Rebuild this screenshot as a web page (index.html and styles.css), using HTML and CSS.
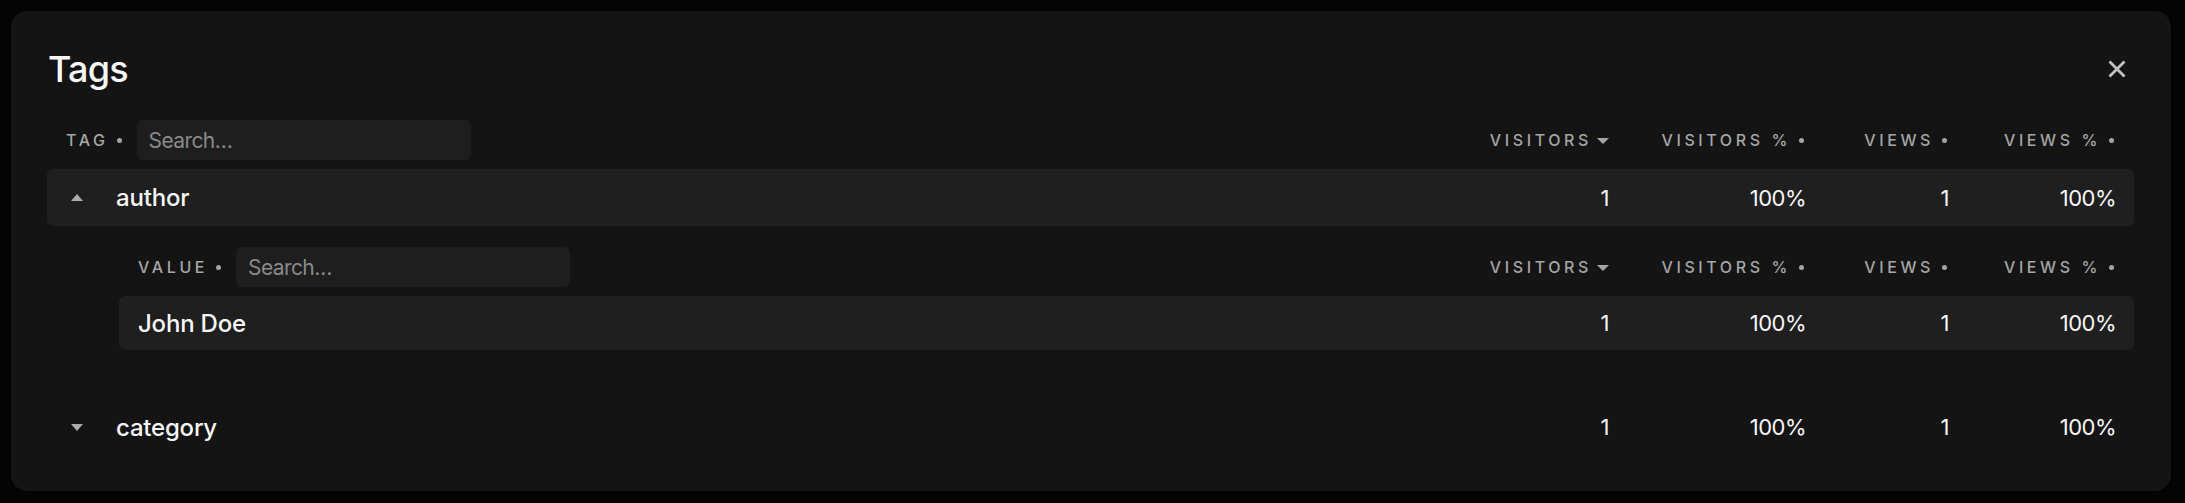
FILE: index.html
```html
<!DOCTYPE html>
<html lang="en">
<head>
<meta charset="utf-8">
<title>Tags</title>
<link rel="stylesheet" href="styles.css">
</head>
<body>
<div class="page">
  <div class="modal">
    <div class="title-row">
      <h1 class="title">Tags</h1>
      <button class="close" aria-label="Close">
        <svg width="18" height="18" viewBox="0 0 18 18"><path d="M1.5 1.5 L16.5 16.5 M16.5 1.5 L1.5 16.5" stroke="#c2c2c2" stroke-width="2.8" fill="none"/></svg>
      </button>
    </div>

    <div class="grid head">
      <div class="head-key"><span class="label">TAG</span><span class="dot"></span><input class="search" placeholder="Search…"></div>
      <div class="hcell"><span class="label">VISITORS</span><span class="sort"></span></div>
      <div class="hcell"><span class="label">VISITORS %</span><span class="dot end"></span></div>
      <div class="hcell"><span class="label">VIEWS</span><span class="dot end"></span></div>
      <div class="hcell"><span class="label">VIEWS %</span><span class="dot end"></span></div>
    </div>

    <div class="grid row filled tall">
      <div class="key"><span class="tri up"></span>author</div>
      <div class="num">1</div>
      <div class="num">100%</div>
      <div class="num">1</div>
      <div class="num">100%</div>
    </div>

    <div class="sub">
      <div class="grid head">
        <div class="head-key"><span class="label">VALUE</span><span class="dot"></span><input class="search" placeholder="Search…"></div>
        <div class="hcell"><span class="label">VISITORS</span><span class="sort"></span></div>
        <div class="hcell"><span class="label">VISITORS %</span><span class="dot end"></span></div>
        <div class="hcell"><span class="label">VIEWS</span><span class="dot end"></span></div>
        <div class="hcell"><span class="label">VIEWS %</span><span class="dot end"></span></div>
      </div>
      <div class="grid row filled short">
        <div class="key">John Doe</div>
        <div class="num">1</div>
        <div class="num">100%</div>
        <div class="num">1</div>
        <div class="num">100%</div>
      </div>
    </div>

    <div class="grid row plain">
      <div class="key"><span class="tri down"></span>category</div>
      <div class="num">1</div>
      <div class="num">100%</div>
      <div class="num">1</div>
      <div class="num">100%</div>
    </div>
  </div>
</div>
</body>
</html>
```

FILE: styles.css
```css
* { box-sizing: border-box; }
html, body {
  margin: 0;
  padding: 0;
  background: #050505;
  font-family: Inter, "Liberation Sans", sans-serif;
  color: #f7f7f7;
}
.page {
  width: 2185px;
  height: 503px;
  padding: 11px 14px 12px 11px;
}
.modal {
  width: 2160px;
  height: 480px;
  background: #141414;
  border-radius: 16px;
  padding: 36px 37px 35px 36px;
  box-shadow: 0 0 12px rgba(0,0,0,0.6);
}
.title-row {
  display: flex;
  align-items: center;
  justify-content: space-between;
  height: 44px;
  margin-bottom: 29px;
}
.title {
  margin: 0;
  font-size: 36px;
  line-height: 44px;
  font-weight: 500;
  letter-spacing: -0.8px;
  padding-left: 1px;
}
.close {
  width: 18px;
  height: 18px;
  padding: 0;
  margin: 0 8px 0 0;
  border: 0;
  background: none;
  display: block;
}
.close svg { display: block; }

.grid {
  display: grid;
  grid-template-columns: 1fr 160px 197px 143px 167px;
  align-items: center;
  padding: 0 18px 0 19px;
}
.head { height: 40px; margin-bottom: 9px; }
.head-key { display: flex; align-items: center; }
.label {
  font-size: 16px;
  letter-spacing: 3.6px;
  color: #a6a6a6;
  font-weight: 500;
  line-height: 20px;
}
.dot {
  width: 5px;
  height: 5px;
  border-radius: 50%;
  background: #a6a6a6;
  margin-left: 8px;
  flex: none;
}
.dot.end { margin-right: 2px; }
.head-key .dot { margin-right: 15px; }
.search {
  width: 334px;
  height: 40px;
  border: 0;
  border-radius: 6px;
  background: #1e1e1e;
  padding: 0 0 0 12px;
  font-family: Inter, "Liberation Sans", sans-serif;
  font-size: 21px;
  color: #ddd;
  outline: none;
  letter-spacing: -0.6px;
}
.search::placeholder { color: #8a8a8a; }
.hcell {
  display: flex;
  align-items: center;
  justify-content: flex-end;
}
.sort {
  width: 0;
  height: 0;
  border-left: 6px solid transparent;
  border-right: 6px solid transparent;
  border-top: 6px solid #a6a6a6;
  margin-left: 5px;
  margin-top: 2px;
}

.row { font-size: 24px; }
.filled { background: #1f1f1f; border-radius: 6px; }
.tall { height: 57px; }
.short { height: 54px; }
.plain { height: 54px; }
.key {
  display: flex;
  align-items: center;
  font-weight: 500;
  letter-spacing: -0.2px;
}
.tri {
  width: 0;
  height: 0;
  border-left: 6.5px solid transparent;
  border-right: 6.5px solid transparent;
  margin-left: 5px;
  margin-right: 33px;
}
.tri.up { border-bottom: 7px solid #ababab; }
.tri.down { border-top: 7px solid #ababab; }
.num {
  text-align: right;
  font-size: 22px;
  font-weight: 400;
  letter-spacing: -0.5px;
}
.sub {
  padding: 21px 0 50px 72px;
}
.sub .head { margin-bottom: 9px; }
```
